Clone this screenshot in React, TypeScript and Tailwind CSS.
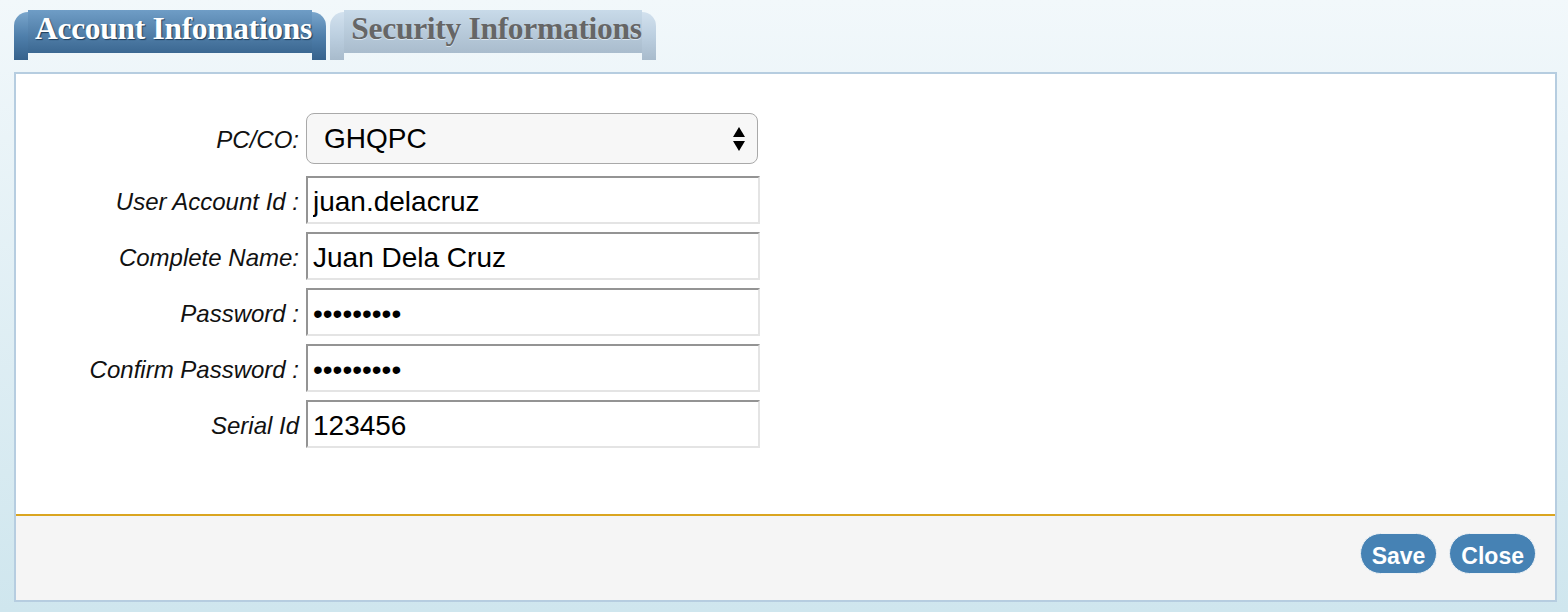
import React from "react";

function Tab({ label, active, width }: { label: string; active: boolean; width: string }) {
  const capGrad = active
    ? "bg-gradient-to-b from-[#7aa6cc] via-[#4f7fab] to-[#36628c]"
    : "bg-gradient-to-b from-[#d2e1ee] via-[#bccfe0] to-[#a8bbcc]";
  const midGrad = active
    ? "bg-gradient-to-b from-[#6f9dc6] to-[#3b6892]"
    : "bg-gradient-to-b from-[#c8dae9] to-[#a9bccd]";
  const text = active
    ? "text-white [text-shadow:1px_1px_1px_#1d3b58]"
    : "text-[#666666] [text-shadow:0px_1px_0px_#d8e4ee]";
  return (
    <div className={`flex items-start ${width}`}>
      <div className={`mt-[2px] h-[48px] w-[22px] rounded-tl-[14px] ${capGrad}`} />
      <div className={`relative z-10 h-[43px] flex-1 ${midGrad}`}>
        <span
          className={`block whitespace-nowrap pl-[7px] pt-[3px] text-[31.5px] font-bold leading-[32px] tracking-[-0.3px] ${text}`}
          style={{ fontFamily: '"Liberation Serif", "Times New Roman", serif' }}
        >
          {label}
        </span>
      </div>
      <div className={`mt-[2px] h-[48px] w-[22px] rounded-tr-[14px] ${capGrad}`} />
    </div>
  );
}

function Row({ label, children }: { label: string; children: React.ReactNode }) {
  return (
    <div className="flex items-center">
      <div className="w-[284px] pr-[1px] pt-[3px] text-right text-[24px] italic text-[#111111]">{label}</div>
      <div className="ml-[6px]">{children}</div>
    </div>
  );
}

function TextInput({ value, type = "text" }: { value: string; type?: string }) {
  return (
    <input
      type={type}
      readOnly
      value={value}
      className="block h-[48px] w-[454px] border-2 border-t-[#949494] border-l-[#949494] border-r-[#e4e4e4] border-b-[#e4e4e4] bg-white pl-[5px] pt-[3px] text-[28px] text-black outline-none"
      style={{ fontFamily: '"Liberation Sans", Arial, sans-serif' }}
    />
  );
}

export default function App() {
  return (
    <div
      className="h-[612px] w-[1568px] bg-gradient-to-b from-[#f2f8fb] to-[#cfe6ee] px-[14px] pt-[10px]"
      style={{ fontFamily: '"Liberation Sans", Arial, sans-serif' }}
    >
      <div className="flex h-[50px] gap-[4px]">
        <Tab label="Account Infomations" active={true} width="w-[312px]" />
        <Tab label="Security Informations" active={false} width="w-[326px]" />
      </div>
      <div className="mt-[12px] flex h-[530px] w-[1543px] flex-col border-2 border-[#b6cde0]">
        <div className="flex h-[440px] flex-col bg-white pt-[39px]">
          <Row label="PC/CO:">
            <div className="flex h-[51px] w-[452px] items-center justify-between rounded-[8px] border-[1.5px] border-[#a9a9a9] bg-[#f7f7f7] pl-[17px] pr-[11px]">
              <span className="text-[28px] text-black">GHQPC</span>
              <svg width="14" height="26" viewBox="0 0 14 26">
                <path d="M7 1 L13 11 L1 11 Z" fill="#000" />
                <path d="M1 15 L13 15 L7 25 Z" fill="#000" />
              </svg>
            </div>
          </Row>
          <div className="mt-[12px] flex flex-col gap-[8px]">
            <Row label="User Account Id :">
              <TextInput value="juan.delacruz" />
            </Row>
            <Row label="Complete Name:">
              <TextInput value="Juan Dela Cruz" />
            </Row>
            <Row label="Password :">
              <TextInput value="123456789" type="password" />
            </Row>
            <Row label="Confirm Password :">
              <TextInput value="123456789" type="password" />
            </Row>
            <Row label="Serial Id">
              <TextInput value="123456" />
            </Row>
          </div>
        </div>
        <div className="h-[2px] bg-[#daa520]" />
        <div className="flex flex-1 items-start justify-end gap-[12px] bg-[#f5f5f5] pr-[19px] pt-[17px]">
          <button className="h-[41px] rounded-full border-[1.5px] border-[#eef2f5] bg-[#4682b4] px-[11px] pt-[4px] text-[23px] font-bold leading-[30px] text-white">
            Save
          </button>
          <button className="h-[41px] rounded-full border-[1.5px] border-[#eef2f5] bg-[#4682b4] px-[11px] pt-[4px] text-[23px] font-bold leading-[30px] text-white">
            Close
          </button>
        </div>
      </div>
    </div>
  );
}
